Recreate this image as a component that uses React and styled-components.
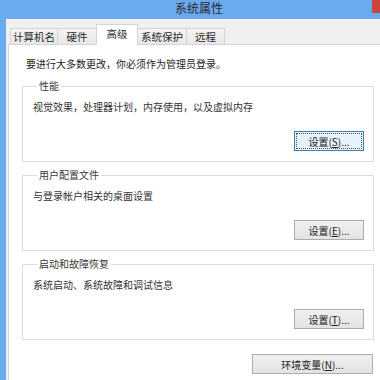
import styled, { createGlobalStyle } from 'styled-components';

const GlobalStyle = createGlobalStyle`
  html, body {
    margin: 0;
    padding: 0;
    background: #f0f0f0;
  }
  body {
    font-family: "Noto Sans CJK SC", "Noto Sans", sans-serif;
    font-size: 10px;
    color: #222;
  }
`;

const tabs = [
  { label: '计算机名', w: 48 },
  { label: '硬件', w: 40 },
  { label: '高级', w: 42, active: true },
  { label: '系统保护', w: 50 },
  { label: '远程', w: 39 },
];

const groups = [
  { title: '性能', desc: '视觉效果，处理器计划，内存使用，以及虚拟内存', key: 'S', focused: true },
  { title: '用户配置文件', desc: '与登录帐户相关的桌面设置', key: 'E' },
  { title: '启动和故障恢复', desc: '系统启动、系统故障和调试信息', key: 'T' },
];

function App() {
  return (
    <>
      <GlobalStyle />
      <Window>
        <TitleBar>
          <Title>系统属性</Title>
          <CloseButton />
        </TitleBar>
        <Body>
          <TabStrip>
            {tabs.map((t) => (
              <Tab key={t.label} $w={t.w} $active={t.active}>
                {t.label}
              </Tab>
            ))}
          </TabStrip>
          <Page>
            <Intro>要进行大多数更改，你必须作为管理员登录。</Intro>
            {groups.map((g) => (
              <Group key={g.title}>
                <Legend>{g.title}</Legend>
                <Desc>{g.desc}</Desc>
                <ButtonRow>
                  <Button $focused={g.focused}>
                    设置(<u>{g.key}</u>)...
                  </Button>
                </ButtonRow>
              </Group>
            ))}
            <EnvRow>
              <Button $wide>
                环境变量(<u>N</u>)...
              </Button>
            </EnvRow>
          </Page>
        </Body>
      </Window>
    </>
  );
}

export default App;

const Window = styled.div`
  width: 380px;
  height: 380px;
  display: flex;
  flex-direction: column;
  overflow: hidden;
  background: #f0f0f0;
`;

const TitleBar = styled.div`
  height: 19px;
  flex: none;
  display: grid;
  grid-template-columns: 1fr auto 1fr;
  align-items: start;
  padding-left: 18px;
  background: #6aaaef;
`;

const Title = styled.div`
  grid-column: 2;
  font-size: 12px;
  line-height: 16px;
  color: #2b2b2b;
`;

const CloseButton = styled.div`
  grid-column: 3;
  justify-self: end;
  width: 8px;
  height: 13px;
  background: #c9463d;
`;

const Body = styled.div`
  flex: 1;
  display: flex;
  flex-direction: column;
  border-left: 6px solid #6aaaef;
  padding-left: 2px;
  min-height: 0;
`;

const TabStrip = styled.div`
  height: 26px;
  flex: none;
  display: flex;
  align-items: flex-end;
  padding-left: 2px;
  margin-bottom: -1px;
  position: relative;
  z-index: 1;
`;

const Tab = styled.div`
  width: ${(p) => p.$w}px;
  height: ${(p) => (p.$active ? 21 : 17)}px;
  margin-left: -1px;
  box-sizing: border-box;
  display: flex;
  align-items: center;
  justify-content: center;
  padding-bottom: ${(p) => (p.$active ? 3 : 0)}px;
  border: 1px solid #d4d4d4;
  border-bottom-color: ${(p) => (p.$active ? '#fff' : '#d4d4d4')};
  background: ${(p) => (p.$active ? '#fff' : 'linear-gradient(#f4f4f4, #e8e8e8)')};
  font-size: 10.5px;
  color: #2a2a2a;
  &:first-child {
    margin-left: 0;
  }
`;

const Page = styled.div`
  flex: 1;
  background: #fff;
  border-top: 1px solid #d4d4d4;
  border-left: 1px solid #d4d4d4;
  padding: 12px 0 0 13px;
  display: flex;
  flex-direction: column;
`;

const Intro = styled.div`
  line-height: 14px;
  padding-left: 4px;
  color: #1e1e1e;
  margin-bottom: 8px;
`;

const Group = styled.fieldset`
  width: 352px;
  box-sizing: border-box;
  margin: 0 0 6px;
  padding: 7px 9px 10px 10px;
  min-width: 0;
  border: 1px solid #dcdcdc;
`;

const Legend = styled.legend`
  margin-left: 4px;
  padding: 0 2px;
  line-height: 14px;
  color: #3a3a3a;
`;

const Desc = styled.div`
  line-height: 14px;
  color: #333;
`;

const ButtonRow = styled.div`
  display: flex;
  justify-content: flex-end;
  margin-top: 17px;
`;

const Button = styled.div`
  width: ${(p) => (p.$wide ? 121 : 70)}px;
  height: 20px;
  box-sizing: border-box;
  display: flex;
  align-items: center;
  justify-content: center;
  font-size: 10px;
  color: #222;
  border: 1px solid ${(p) => (p.$focused ? '#3c7fb1' : '#adadad')};
  background: ${(p) => (p.$focused ? '#e5f1fb' : 'linear-gradient(#f0f0f0, #e3e3e3)')};
  outline: ${(p) => (p.$focused ? '1px dotted #555' : 'none')};
  outline-offset: -3px;
  u {
    text-underline-offset: 1px;
  }
`;

const EnvRow = styled.div`
  width: 351px;
  display: flex;
  justify-content: flex-end;
  margin-top: 8px;
`;
